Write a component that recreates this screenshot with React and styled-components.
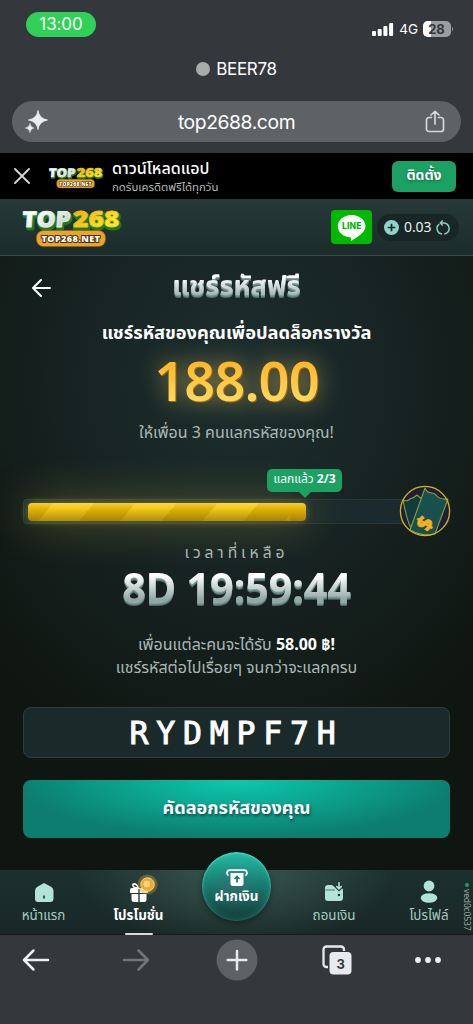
import React from 'react';
import styled, { createGlobalStyle, css } from 'styled-components';

const GlobalStyle = createGlobalStyle`
  * { box-sizing: border-box; }
  body {
    margin: 0;
    background: #34373b;
    font-family: "Noto Sans", "Noto Sans Thai", "Open Sans", sans-serif;
  }
`;

const Phone = styled.div`
  width: 473px;
  height: 1024px;
  overflow: hidden;
  display: flex;
  flex-direction: column;
  background: #34373b;
  color: #fff;
`;

/* ---------- browser chrome ---------- */

const BrowserTop = styled.div`
  height: 153px;
  flex: none;
  padding: 12px 12px 0;
  font-family: Inter, "Liberation Sans", sans-serif;
`;

const StatusBar = styled.div`
  height: 46px;
  display: flex;
  justify-content: space-between;
  padding: 0 7px 0 14px;
`;

const Clock = styled.div`
  width: 70px;
  height: 25px;
  border-radius: 13px;
  background: #30d158;
  font-size: 17px;
  line-height: 25px;
  text-align: center;
  letter-spacing: -0.1px;
`;

const StatusIcons = styled.div`
  display: flex;
  align-items: center;
  gap: 5px;
  height: 33px;
  font-size: 13.5px;
`;

const TabTitle = styled.div`
  height: 22px;
  display: flex;
  align-items: center;
  justify-content: center;
  gap: 6px;
  font-size: 17px;
  letter-spacing: -0.3px;
`;

const Dot = styled.span`
  width: 14px;
  height: 14px;
  border-radius: 50%;
  background: #a9abad;
`;

const UrlBar = styled.div`
  margin-top: 21px;
  height: 41px;
  border-radius: 21px;
  background: #5e6266;
  display: flex;
  align-items: center;
  justify-content: space-between;
  padding: 0 16px 0 13px;
  font-size: 19.3px;
  letter-spacing: -0.4px;
`;

/* ---------- install banner and header ---------- */

const Banner = styled.div`
  height: 46px;
  flex: none;
  background: #000;
  display: flex;
  align-items: center;
  padding: 0 17px 0 14px;
`;

const BannerLogo = styled.div`
  margin: 2px 6.7px 0 17px;
  height: 28px;
`;

const BannerText = styled.div`
  flex: 1;
  display: flex;
  flex-direction: column;
`;

const BannerTitle = styled.div`
  font-size: 16.1px;
  line-height: 20px;
  font-weight: 500;
`;

const BannerSub = styled.div`
  font-size: 11.4px;
  line-height: 17px;
  color: #b4b8b7;
`;

const Install = styled.button`
  border: 0;
  width: 64px;
  height: 31px;
  padding: 0 0 4px;
  border-radius: 6px;
  background: #1ba262;
  color: #fff;
  font: 700 14px/27px "Noto Sans", "Noto Sans Thai", sans-serif;
  text-shadow: 0 1px 3px rgba(0, 0, 0, 0.4);
`;

const Header = styled.div`
  height: 57px;
  flex: none;
  display: flex;
  align-items: center;
  padding: 0 14px 0 19px;
  background: linear-gradient(#263938, #1b2c2a);
  border-bottom: 1px solid #3a4f4c;
`;

const HeaderLogo = styled.div`
  flex: 1;
  height: 50px;
  margin-top: -3px;
`;

const LineButton = styled.div`
  width: 41px;
  height: 34px;
  border-radius: 4px;
  background: #00b900;
`;

const Balance = styled.div`
  margin-left: 5px;
  width: 82px;
  height: 27px;
  border-radius: 14px;
  background: #182725;
  display: flex;
  align-items: center;
  padding: 0 8px 0 7px;
  gap: 5px;
  font-size: 14px;
  letter-spacing: -0.1px;
  line-height: 24px;
  color: #e6efed;
  span { padding-bottom: 1px; }
`;

/* ---------- page ---------- */

const Page = styled.main`
  height: 614px;
  flex: none;
  display: flex;
  flex-direction: column;
  padding: 0 23px;
  background: radial-gradient(ellipse 330px 400px at 50% 20%, #1d2f2e 0%, #172322 50%, #0f1611 100%);
`;

const TitleRow = styled.div`
  height: 60px;
  display: grid;
  grid-template-columns: 36px 1fr 36px;
  align-items: center;
  padding-top: 3px;
`;

const Metal = styled.span`
  color: transparent;
  background: linear-gradient(#fff 30%, #93a8a4 72%);
  -webkit-background-clip: text;
  background-clip: text;
  filter: drop-shadow(0 1px 0 #819b96) drop-shadow(0 1px 0 #6d8883) drop-shadow(0 1px 0 #4e6b66);
`;

const Title = styled(Metal)`
  text-align: center;
  font-size: 27.3px;
  line-height: 44px;
  font-weight: 700;
  padding-bottom: 5px;
`;

const Line = styled.div`
  height: ${p => p.$h}px;
  line-height: ${p => p.$h}px;
  font-size: ${p => p.$size}px;
  font-weight: ${p => p.$weight || 400};
  color: ${p => p.$color || '#aab8b5'};
  letter-spacing: ${p => p.$track || 0}px;
  margin-top: ${p => p.$top || 0}px;
  text-align: center;
  white-space: nowrap;
  b { color: #fff; font-weight: 700; }
`;

const Amount = styled.div`
  height: 72px;
  line-height: 66px;
  text-align: center;
  font-size: 54px;
  font-weight: 600;
  letter-spacing: -0.8px;
  span {
    color: transparent;
    background: linear-gradient(#ffb629 25%, #ffd65a 75%);
    -webkit-background-clip: text;
    background-clip: text;
    filter: drop-shadow(1px 1px 0 #9c6a14) drop-shadow(0 0 11px rgba(255, 215, 110, 0.5));
  }
`;

const Progress = styled.div`
  position: relative;
  margin-top: 54px;
  height: 25px;
  border: 1px solid #26383a;
  border-right: 0;
  border-radius: 4px;
  background: #1b2b2d;
  padding: 3px 4px;
`;

const Fill = styled.div`
  height: 18px;
  border-radius: 4px;
  background:
    linear-gradient(rgba(255, 232, 110, 0.5), rgba(255, 210, 30, 0) 30%, rgba(90, 65, 0, 0.45)),
    repeating-linear-gradient(130deg, #e3b508 0 31.5px, #f5ca18 31.5px 63px);
  background-position: 0 0, -16px 0;
  box-shadow: 0 0 9px rgba(255, 225, 90, 0.3), 0 0 44px rgba(255, 221, 90, 0.36);
`;

const Bubble = styled.div`
  position: absolute;
  left: 243px;
  top: -31px;
  width: 75px;
  height: 23px;
  border-radius: 5px;
  background: #1ba262;
  font-size: 12px;
  line-height: 20px;
  text-align: center;
  white-space: nowrap;
  &::after {
    content: "";
    position: absolute;
    left: 32px;
    top: 23px;
    border: 6px solid transparent;
    border-top-color: #1ba262;
    border-bottom: 0;
  }
`;

const Ticket = styled.svg`
  position: absolute;
  right: -1px;
  top: -15px;
`;

const Timer = styled.div`
  height: 52px;
  line-height: 47px;
  font-size: 41.5px;
  font-weight: 700;
  text-align: center;
  letter-spacing: -0.2px;
`;

const CodeBox = styled.div`
  margin-top: 28px;
  height: 51px;
  flex: none;
  border: 1.5px solid #2c3f3e;
  border-radius: 8px;
  background: #1a2a2a;
  display: flex;
  align-items: center;
  justify-content: center;
  padding: 1px 0 0;
  font: 400 31.5px/40px "DejaVu Sans Mono", monospace;
  letter-spacing: 7.8px;
  -webkit-text-stroke: 1px #fff;
`;

const CopyButton = styled.button`
  margin-top: 22px;
  height: 58px;
  flex: none;
  border: 0;
  border-radius: 8px;
  background: radial-gradient(ellipse 52% 100% at 50% 0, #0dc9ae, #0c7d6e);
  color: #fff;
  font: 700 18.1px/24px "Noto Sans", "Noto Sans Thai", sans-serif;
  padding-bottom: 5px;
  text-shadow: 1px 2px 3px rgba(0, 0, 0, 0.5);
`;

/* ---------- bottom navigation ---------- */

const Nav = styled.nav`
  position: relative;
  height: 65px;
  flex: none;
  display: grid;
  grid-template-columns: 87px 103px 93px 102px 88px;
  border-bottom: 1px solid #131a1b;
  background:
    radial-gradient(ellipse 160px 75px at 50% 0, #3a5750, transparent),
    linear-gradient(#1c302d, #192826);
`;

const NavItem = styled.div`
  display: flex;
  flex-direction: column;
  align-items: center;
  padding-top: 10px;
  font-size: 13.4px;
  line-height: 20px;
  color: ${p => (p.$active ? '#fff' : '#a5cbc2')};
  font-weight: ${p => (p.$active ? 700 : 400)};
  white-space: nowrap;
  svg { flex: none; margin-bottom: 1px; overflow: visible; }
  ${p => p.$active && css`
    &::after {
      content: "";
      width: 28px;
      height: 2px;
      margin-top: 8px;
      border-radius: 1px;
      background: #d6dddb;
    }
  `}
`;

const Deposit = styled.div`
  position: absolute;
  left: 202px;
  top: -18px;
  width: 69px;
  height: 69px;
  border-radius: 50%;
  display: flex;
  flex-direction: column;
  align-items: center;
  padding-top: 17px;
  font-size: 13.4px;
  line-height: 18px;
  font-weight: 700;
  white-space: nowrap;
  background:
    radial-gradient(circle at 45% 50%, rgba(70, 100, 120, 0.5), transparent 45%),
    linear-gradient(#25bba7, #187f72 45%, #163f3a 95%);
  box-shadow: inset 0 1px 2px #4fe0cc, inset 0 0 7px rgba(60, 210, 185, 0.35), 0 2px 6px rgba(0, 0, 0, 0.4);
`;

const Version = styled.div`
  position: absolute;
  right: 0;
  top: 13px;
  height: 50px;
  width: 12px;
  writing-mode: vertical-rl;
  font-size: 8.6px;
  line-height: 12px;
  color: #9aa8a5;
  display: flex;
  align-items: center;
  gap: 2px;
  letter-spacing: -0.2px;
  &::before {
    content: "";
    flex: none;
    width: 4px;
    height: 4px;
    border-radius: 50%;
    background: #16a05d;
  }
`;

const BrowserBottom = styled.div`
  flex: 1;
  display: grid;
  grid-template-columns: 72px 128px 73px 127px 55px;
  justify-items: center;
  align-items: start;
  padding-top: 4px;
  svg { display: block; }
`;

function Logo({ width, id }) {
  return (
    <svg width={width * 1.06} height={width * 0.5} viewBox="-2 -8 106 50" display="block">
      <defs>
        <linearGradient id={id + 'w'} x1="0" y1="0" x2="1" y2="1">
          <stop offset="0.3" stopColor="#fff" />
          <stop offset="1" stopColor="#b4c0b7" />
        </linearGradient>
        <linearGradient id={id + 'g'} x1="0" y1="0" x2="1" y2="1">
          <stop offset="0.1" stopColor="#ff9d14" />
          <stop offset="0.7" stopColor="#ffe52b" />
        </linearGradient>
      </defs>
      <g fontFamily="Open Sans, Noto Sans, sans-serif" fontWeight="800" fontSize="22" strokeLinejoin="round">
        <g fill="#1b7a22" stroke="#1b7a22" strokeWidth="3">
          <text x="3.5" y="19.5" textLength="48" lengthAdjust="spacingAndGlyphs" transform="skewX(-4)">TOP</text>
          <text x="53" y="19.5" textLength="46.5" lengthAdjust="spacingAndGlyphs">268</text>
        </g>
        <text x="2" y="18" textLength="48.5" lengthAdjust="spacingAndGlyphs" transform="skewX(-4)" fill={`url(#${id}w)`} stroke="#e8eee9" strokeWidth="0.8">TOP</text>
        <text x="52" y="18" textLength="46.5" lengthAdjust="spacingAndGlyphs" fill={`url(#${id}g)`} stroke="#e9c51d" strokeWidth="0.8">268</text>
      </g>
      <rect x="15.5" y="21.5" width="69" height="16" rx="7" fill="#eba526" stroke="#9a5d10" strokeWidth="0.6" />
      <text
        x="20.5" y="33" textLength="58.5" lengthAdjust="spacing"
        fontFamily="Open Sans, Noto Sans, sans-serif" fontWeight="800" fontSize="9.2"
        fill="#fff" stroke="#4b2b10" strokeWidth="2" paintOrder="stroke"
      >
        TOP268.NET
      </text>
    </svg>
  );
}

function SignalIcons() {
  return (
    <StatusIcons>
      <svg width="22" height="14" viewBox="0 0 22 14" fill="#fff">
        <rect x="0" y="9" width="4" height="5" rx="1" />
        <rect x="5.7" y="7" width="4" height="7" rx="1" />
        <rect x="11.4" y="4" width="4" height="10" rx="1" />
        <rect x="17.1" y="1" width="4" height="13" rx="1" />
      </svg>
      4G
      <svg width="31" height="16" viewBox="0 0 31 16">
        <rect width="28" height="16" rx="5" fill="#9b9d9f" />
        <path d="M5 0H8V16H5A5 5 0 0 1 0 11V5A5 5 0 0 1 5 0Z" fill="#fff" />
        <path d="M29 5.5Q31 8 29 10.5Z" fill="#9b9d9f" />
        <text x="13.5" y="12.6" textAnchor="middle" fontSize="13" fontWeight="700" fill="#34373b">28</text>
      </svg>
    </StatusIcons>
  );
}

function TicketIcon() {
  return (
    <Ticket width="52" height="52" viewBox="0 0 52 52">
      <circle cx="26" cy="26" r="24.6" fill="#1c1f35" />
      <g stroke="#8f9a3e" strokeWidth="1.1" strokeLinejoin="round">
        <path d="M4 15Q8 17 11 14Q15 13 18 10L24 15L12 43Q8 36 4 15Z" fill="#123b3b" />
        <path d="M26 3Q28 8 33 8Q35 8 37 10Q41 15 49 14L36 49Q24 52 11 45Z" fill="#17504d" />
      </g>
      <circle cx="26" cy="26" r="24.6" fill="none" stroke="#d9b224" strokeWidth="1.3" />
      <text x="25.5" y="46" textAnchor="middle" transform="rotate(-58 25.5 38.5)" fontFamily="Open Sans, Noto Sans, sans-serif" fontSize="21" fontWeight="800" fill="#f9b01c" stroke="#f9b01c" strokeWidth="0.5">$</text>
    </Ticket>
  );
}

export default function App() {
  return (
    <Phone>
      <GlobalStyle />
      <BrowserTop>
        <StatusBar>
          <Clock>13:00</Clock>
          <SignalIcons />
        </StatusBar>
        <TabTitle><Dot />BEER78</TabTitle>
        <UrlBar>
          <svg width="23" height="23" viewBox="0 0 23 23" fill="#eceef0" stroke="#eceef0" strokeLinejoin="round">
            <path d="M13 0.5Q14 8.5 22.5 10Q14 11.5 13 19.5Q12 11.5 3.5 10Q12 8.5 13 0.5Z" strokeWidth="0.8" />
            <path d="M5 13.5Q5.4 17.4 9 18Q5.4 18.6 5 22.5Q4.6 18.6 0.5 18Q4.6 17.4 5 13.5Z" strokeWidth="0.6" />
          </svg>
          top2688.com
          <svg width="20" height="23" viewBox="0 0 20 23" fill="none" stroke="#d5d7d9" strokeWidth="1.7" strokeLinecap="round" strokeLinejoin="round">
            <path d="M6.5 7.5H4A2.5 2.5 0 0 0 1.5 10V19A2.5 2.5 0 0 0 4 21.5H16A2.5 2.5 0 0 0 18.5 19V10A2.5 2.5 0 0 0 16 7.5H13.5M10 14V1.5M6 5L10 1.3L14 5" />
          </svg>
        </UrlBar>
      </BrowserTop>

      <Banner>
        <svg width="16" height="16" viewBox="0 0 16 16" stroke="#d5d7d7" strokeWidth="1.8" strokeLinecap="round">
          <path d="M1 1L15 15M15 1L1 15" />
        </svg>
        <BannerLogo><Logo width={55} id="small" /></BannerLogo>
        <BannerText>
          <BannerTitle>ดาวน์โหลดแอป</BannerTitle>
          <BannerSub>กดรับเครดิตฟรีได้ทุกวัน</BannerSub>
        </BannerText>
        <Install>ติดตั้ง</Install>
      </Banner>

      <Header>
        <HeaderLogo><Logo width={100} id="big" /></HeaderLogo>
        <LineButton>
          <svg width="41" height="34" viewBox="0 0 41 34">
            <path d="M20.5 5C28.5 5 34.5 10 34.5 16.2C34.5 22 28 26 20 31C19.5 30 20.5 28 19.5 27.3C12 26.8 6.8 22 6.8 16.2C6.8 10 12.8 5 20.5 5Z" fill="#fff" />
            <text x="11" y="19.3" textLength="19.5" lengthAdjust="spacing" fontFamily="Inter, sans-serif" fontSize="8.5" fontWeight="800" fill="#00b900">LINE</text>
          </svg>
        </LineButton>
        <Balance>
          <svg width="15" height="15" viewBox="0 0 15 15">
            <circle cx="7.5" cy="7.5" r="7.5" fill="#8fd3ca" />
            <path d="M7.5 3.7V11.3M3.7 7.5H11.3" stroke="#172725" strokeWidth="1.7" />
          </svg>
          <span>0.03</span>
          <svg width="14" height="15" viewBox="0 0 14 15" fill="none" stroke="#8fc9c0" strokeWidth="1.5">
            <path d="M3.2 4.2A5.5 5.5 0 0 0 6 14M8.2 14A5.5 5.5 0 0 0 7 3H4.5M6.8 0.5L4.3 3L6.8 5.5" />
          </svg>
        </Balance>
      </Header>

      <Page>
        <TitleRow>
          <svg width="36" height="20" viewBox="0 0 36 20" fill="none" stroke="#fff" strokeWidth="2" strokeLinecap="round" strokeLinejoin="round">
            <path d="M27 10H10M18 2L10 10L18 18" />
          </svg>
          <Title>แชร์รหัสฟรี</Title>
        </TitleRow>
        <Line $h={30} $size={18.25} $weight={700} $color="#fff" $top={1}>แชร์รหัสของคุณเพื่อปลดล็อกรางวัล</Line>
        <Amount><span>188.00</span></Amount>
        <Line $h={26} $size={16}>ให้เพื่อน 3 คนแลกรหัสของคุณ!</Line>
        <Progress>
          <Fill style={{ width: 278 }} />
          <Bubble>แลกแล้ว <b>2/3</b></Bubble>
          <TicketIcon />
        </Progress>
        <Line $h={24} $size={15.7} $track={3.9} $top={16}>เวลาที่เหลือ</Line>
        <Timer><Metal>8D 19:59:44</Metal></Timer>
        <Line $h={23} $size={16} $top={17}>เพื่อนแต่ละคนจะได้รับ <b>58.00 ฿!</b></Line>
        <Line $h={23} $size={16}>แชร์รหัสต่อไปเรื่อยๆ จนกว่าจะแลกครบ</Line>
        <CodeBox>RYDMPF7H</CodeBox>
        <CopyButton>คัดลอกรหัสของคุณ</CopyButton>
      </Page>

      <Nav>
        <NavItem>
          <svg width="22" height="24" viewBox="0 0 22 24">
            <path d="M11 3L18.5 7Q20.5 8.5 20.5 11V18.5Q20.5 22 17 22H5Q2 22 2 18.5V11Q2 8.5 4 7Z" fill="#b3e2d8" />
            <path d="M11 15.5V18.5" stroke="#1c302d" strokeWidth="1.6" />
          </svg>
          หน้าแรก
        </NavItem>
        <NavItem $active>
          <svg width="22" height="24" viewBox="0 0 22 24">
            <g fill="#fff">
              <path d="M2 10Q2 8 4 8H18Q20 8 20 10V13H2Z" />
              <path d="M3.5 14H10.3V22H6Q3.5 22 3.5 19.5ZM11.7 14H18.5V19.5Q18.5 22 16 22H11.7Z" />
              <path d="M10.5 8Q4 8 5 4.5Q8 2.5 10.5 8Z" fill="none" stroke="#fff" strokeWidth="1.7" />
              <path d="M11 9V13" stroke="#1c302d" strokeWidth="1.2" />
            </g>
            <circle cx="19.5" cy="4.5" r="10" fill="#c9953b" opacity="0.4" />
            <circle cx="19.5" cy="4.5" r="6.8" fill="#eeaa38" stroke="#ffe28b" strokeWidth="0.8" />
            <circle cx="18.8" cy="4" r="4" fill="#ffd474" stroke="#dd9a30" strokeWidth="0.8" />
          </svg>
          โปรโมชั่น
        </NavItem>
        <div />
        <NavItem>
          <svg width="22" height="24" viewBox="0 0 22 24">
            <path d="M2 8Q2 5 5 5H9L11.5 7H17Q20 7.5 20 11V18Q20 21 17 21H5Q2 21 2 18Z" fill="#b3e2d8" />
            <path d="M16 1V8.5M13 6L16 9L19 6" fill="none" stroke="#1c302d" strokeWidth="3.5" />
            <path d="M16 2V8.5M13.3 6.2L16 8.8L18.7 6.2" fill="none" stroke="#b3e2d8" strokeWidth="1.6" />
            <path d="M2.5 10H12" stroke="#1c302d" strokeWidth="0.6" />
            <circle cx="16" cy="15" r="1.2" fill="#1c302d" />
          </svg>
          ถอนเงิน
        </NavItem>
        <NavItem>
          <svg width="22" height="24" viewBox="0 0 22 24" fill="#b3e2d8">
            <circle cx="11" cy="6" r="5.4" />
            <ellipse cx="11" cy="18" rx="8.3" ry="4.8" />
          </svg>
          โปรไฟล์
        </NavItem>
        <Deposit>
          <svg width="22" height="18" viewBox="0 0 22 18">
            <path d="M2.5 6.5Q0.8 5.5 1 3.8Q1.2 1.2 4 1.2H18Q20.8 1.2 21 3.8Q21 5.5 19.5 6.5" fill="none" stroke="#fff" strokeWidth="1.7" />
            <path d="M4.5 4H17.5V14.5Q17.5 17 15 17H7Q4.5 17 4.5 14.5Z" fill="#fff" />
            <path d="M11 13.5V8M8.5 10L11 7.5L13.5 10" fill="none" stroke="#18766a" strokeWidth="1.7" />
          </svg>
          ฝากเงิน
        </Deposit>
        <Version>ved0c0537</Version>
      </Nav>

      <BrowserBottom>
        <svg width="28" height="42" viewBox="0 0 28 42" fill="none" stroke="#eceef0" strokeWidth="2.5" strokeLinecap="round" strokeLinejoin="round">
          <path d="M26 21H2M11.5 11.5L2 21L11.5 30.5" />
        </svg>
        <svg width="28" height="42" viewBox="0 0 28 42" fill="none" stroke="#74777a" strokeWidth="2.5" strokeLinecap="round" strokeLinejoin="round">
          <path d="M2 21H26M16.5 11.5L26 21L16.5 30.5" />
        </svg>
        <svg width="42" height="42" viewBox="0 0 42 42">
          <circle cx="21" cy="21" r="20.5" fill="#5d6064" />
          <path d="M21 12V30.5M11.7 21H30.3" stroke="#e8eaed" strokeWidth="2.5" strokeLinecap="round" />
        </svg>
        <svg width="30" height="42" viewBox="0 0 30 42">
          <path d="M6 28H4.5A3 3 0 0 1 1.5 25V10.5A3 3 0 0 1 4.5 7.5H19A3 3 0 0 1 22 10.5V12" fill="none" stroke="#e8eaed" strokeWidth="2.3" />
          <rect x="7.5" y="13" width="22" height="22.5" rx="4" fill="#e8eaed" />
          <text x="18.7" y="29.5" textAnchor="middle" fontFamily="Inter, sans-serif" fontSize="13" fontWeight="700" fill="#34373b">3</text>
        </svg>
        <svg width="28" height="42" viewBox="0 0 28 42" fill="#eceef0">
          <circle cx="4" cy="21" r="2.9" />
          <circle cx="14" cy="21" r="2.9" />
          <circle cx="24" cy="21" r="2.9" />
        </svg>
      </BrowserBottom>
    </Phone>
  );
}
